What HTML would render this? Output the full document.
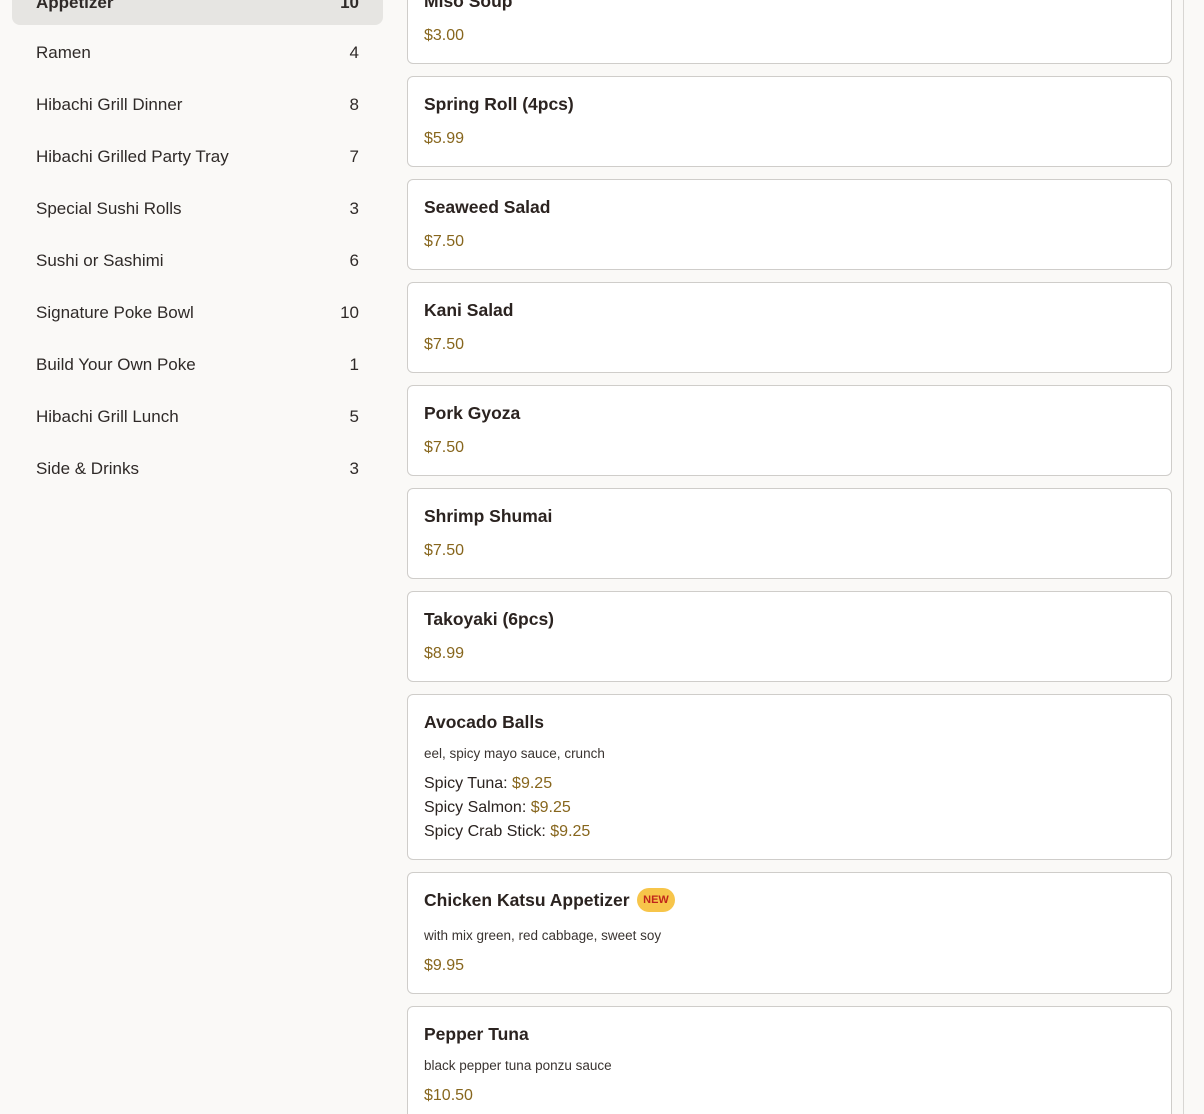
<!DOCTYPE html>
<html style="overflow:hidden;height:1114px"><head><meta charset="utf-8"><style>
*{margin:0;padding:0;box-sizing:border-box}
body{width:1204px;height:1114px;overflow:hidden;background:#faf9f7;font-family:"Liberation Sans",sans-serif;position:relative;color:#2b2320}
.t{position:absolute;line-height:20px;white-space:nowrap}
.side{font-size:17px;color:#2f2a28}
.n{right:845px;text-align:right}
.card{position:absolute;left:407px;width:765px;background:#fff;border:1px solid #cfcdca;border-radius:6px}
.ti{font-size:17.5px;font-weight:bold;color:#2b2320}
.pr{font-size:16px;color:#87661d}
.de{font-size:13.5px;color:#3a3431}
.op{font-size:16px;color:#2b2320}
</style></head><body>
<div style="position:absolute;left:12px;top:-20px;width:371px;height:45px;background:#e6e5e2;border-radius:8px"></div>
<div class="t side" style="left:36px;top:-7px;font-weight:bold">Appetizer</div><div class="t side n" style="top:-7px;font-weight:bold">10</div>
<div class="t side" style="left:36px;top:43px">Ramen</div><div class="t side n" style="top:43px">4</div>
<div class="t side" style="left:36px;top:95px">Hibachi Grill Dinner</div><div class="t side n" style="top:95px">8</div>
<div class="t side" style="left:36px;top:147px">Hibachi Grilled Party Tray</div><div class="t side n" style="top:147px">7</div>
<div class="t side" style="left:36px;top:199px">Special Sushi Rolls</div><div class="t side n" style="top:199px">3</div>
<div class="t side" style="left:36px;top:251px">Sushi or Sashimi</div><div class="t side n" style="top:251px">6</div>
<div class="t side" style="left:36px;top:303px">Signature Poke Bowl</div><div class="t side n" style="top:303px">10</div>
<div class="t side" style="left:36px;top:355px">Build Your Own Poke</div><div class="t side n" style="top:355px">1</div>
<div class="t side" style="left:36px;top:407px">Hibachi Grill Lunch</div><div class="t side n" style="top:407px">5</div>
<div class="t side" style="left:36px;top:459px">Side &amp; Drinks</div><div class="t side n" style="top:459px">3</div>

<div style="position:absolute;left:1183px;top:0;width:1px;height:1114px;background:#d8d6d3"></div>

<div class="card" style="top:-27px;height:91px"></div>
<div class="t ti" style="left:424px;top:-9px">Miso Soup</div><div class="t pr" style="left:424px;top:26px">$3.00</div>

<div class="card" style="top:76px;height:91px"></div>
<div class="t ti" style="left:424px;top:94px">Spring Roll (4pcs)</div><div class="t pr" style="left:424px;top:129px">$5.99</div>

<div class="card" style="top:179px;height:91px"></div>
<div class="t ti" style="left:424px;top:197px">Seaweed Salad</div><div class="t pr" style="left:424px;top:232px">$7.50</div>

<div class="card" style="top:282px;height:91px"></div>
<div class="t ti" style="left:424px;top:300px">Kani Salad</div><div class="t pr" style="left:424px;top:335px">$7.50</div>

<div class="card" style="top:385px;height:91px"></div>
<div class="t ti" style="left:424px;top:403px">Pork Gyoza</div><div class="t pr" style="left:424px;top:438px">$7.50</div>

<div class="card" style="top:488px;height:91px"></div>
<div class="t ti" style="left:424px;top:506px">Shrimp Shumai</div><div class="t pr" style="left:424px;top:541px">$7.50</div>

<div class="card" style="top:591px;height:91px"></div>
<div class="t ti" style="left:424px;top:609px">Takoyaki (6pcs)</div><div class="t pr" style="left:424px;top:644px">$8.99</div>

<div class="card" style="top:694px;height:166px"></div>
<div class="t ti" style="left:424px;top:712px">Avocado Balls</div>
<div class="t de" style="left:424px;top:744px">eel, spicy mayo sauce, crunch</div>
<div class="t op" style="left:424px;top:774px">Spicy Tuna: <span style="color:#87661d">$9.25</span></div>
<div class="t op" style="left:424px;top:798px">Spicy Salmon: <span style="color:#87661d">$9.25</span></div>
<div class="t op" style="left:424px;top:822px">Spicy Crab Stick: <span style="color:#87661d">$9.25</span></div>

<div class="card" style="top:872px;height:122px"></div>
<div class="t ti" style="left:424px;top:890px">Chicken Katsu Appetizer</div>
<div style="position:absolute;left:637px;top:888px;width:38px;height:24px;border-radius:12px;background:#f7c54a;color:#c0261b;font-size:11px;font-weight:bold;text-align:center;line-height:24px">NEW</div>
<div class="t de" style="left:424px;top:926px">with mix green, red cabbage, sweet soy</div>
<div class="t pr" style="left:424px;top:956px">$9.95</div>

<div class="card" style="top:1006px;height:130px"></div>
<div class="t ti" style="left:424px;top:1024px">Pepper Tuna</div>
<div class="t de" style="left:424px;top:1056px">black pepper tuna ponzu sauce</div>
<div class="t pr" style="left:424px;top:1086px">$10.50</div>
</body></html>
